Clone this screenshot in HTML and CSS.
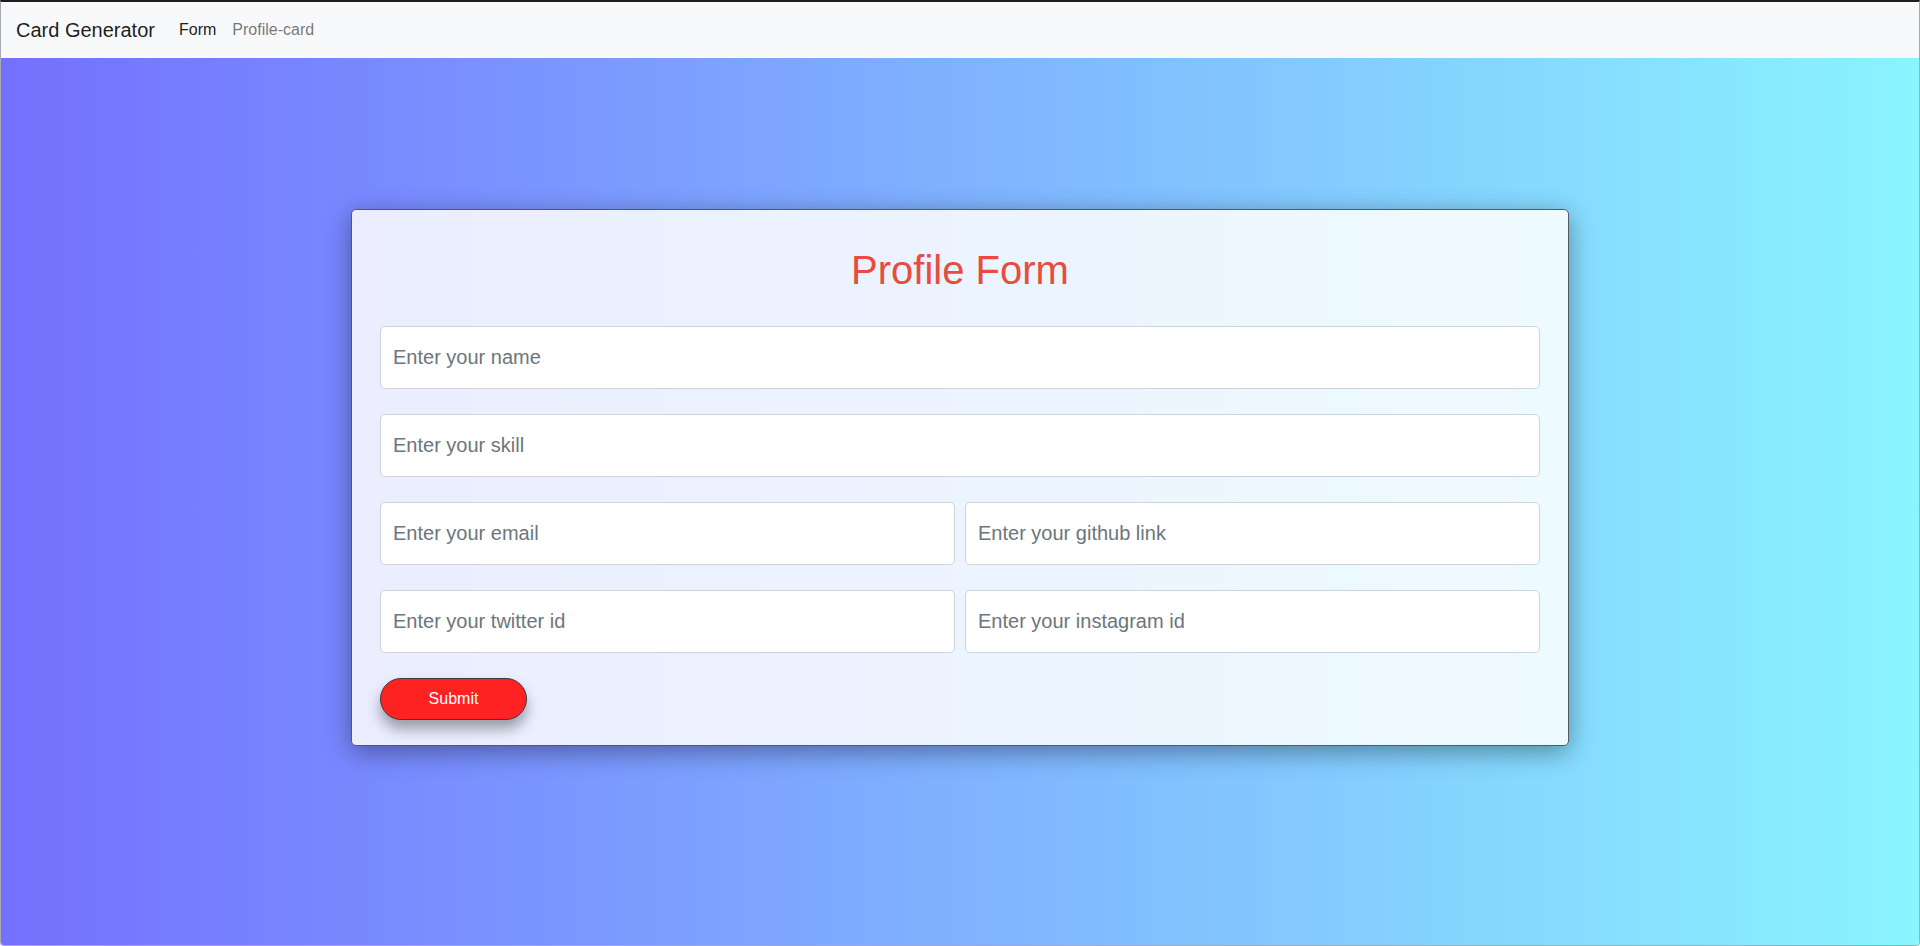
FILE: index.html
```html
<!DOCTYPE html>
<html lang="en">
<head>
<meta charset="utf-8">
<title>Card Generator</title>
<link rel="stylesheet" href="styles.css">
</head>
<body>
<div class="page">
  <nav class="navbar">
    <a class="brand" href="#">Card Generator</a>
    <a class="nav-link active" href="#">Form</a>
    <a class="nav-link" href="#">Profile-card</a>
  </nav>
  <main class="main">
    <form class="card">
      <h1 class="title">Profile Form</h1>
      <input class="field" type="text" placeholder="Enter your name">
      <input class="field" type="text" placeholder="Enter your skill">
      <div class="pair">
        <input class="field" type="text" placeholder="Enter your email">
        <input class="field" type="text" placeholder="Enter your github link">
      </div>
      <div class="pair">
        <input class="field" type="text" placeholder="Enter your twitter id">
        <input class="field" type="text" placeholder="Enter your instagram id">
      </div>
      <button class="submit" type="button">Submit</button>
    </form>
  </main>
</div>
</body>
</html>
```
FILE: styles.css
```css
* { box-sizing: border-box; }
html, body { margin: 0; padding: 0; height: 100%; }
body { font-family: "Liberation Sans", Arial, sans-serif; color: #212529; }

.page {
  height: 946px;
  display: flex;
  flex-direction: column;
  border: 1px solid #a7aab0;
  border-top: 2px solid #1e1e1e;
  border-radius: 0 0 4px 4px;
  overflow: hidden;
}

.navbar {
  height: 56px;
  flex: none;
  background: #f8f9fa;
  display: flex;
  align-items: center;
  padding: 0 15px;
}
.brand {
  font-size: 20px;
  line-height: 30px;
  color: rgba(0,0,0,.9);
  text-decoration: none;
  margin-right: 16px;
}
.nav-link {
  font-size: 16px;
  line-height: 24px;
  padding: 8px;
  color: rgba(0,0,0,.55);
  text-decoration: none;
}
.nav-link.active { color: rgba(0,0,0,.9); }

.main {
  flex: 1;
  background: linear-gradient(to right, #7470ff, #8af4ff);
  padding-top: 151px;
}

.card {
  width: 1218px;
  margin: 0 auto;
  background: rgba(255,255,255,.85);
  border: 1px solid #555a60;
  border-radius: 5px;
  box-shadow: 0 6px 26px rgba(0,0,0,.38);
  padding: 36px 28px 25px;
  display: flex;
  flex-direction: column;
  gap: 25px;
}
.title {
  margin: 0 0 7px;
  font-size: 40px;
  line-height: 48px;
  font-weight: 400;
  text-align: center;
  color: #e74c3c;
}
.field {
  display: block;
  width: 100%;
  height: 63px;
  padding: 0 12px;
  font: 20px/30px "Liberation Sans", Arial, sans-serif;
  color: #212529;
  background: #fff;
  border: 1px solid #ced4da;
  border-radius: 5px;
  outline: none;
}
.field::placeholder { color: #6c757d; opacity: 1; }

.pair {
  display: grid;
  grid-template-columns: 1fr 1fr;
  gap: 10px;
}

.submit {
  align-self: flex-start;
  width: 147px;
  height: 42px;
  margin-top: 0;
  background: #ff2222;
  color: #fff;
  font: 16px/24px "Liberation Sans", Arial, sans-serif;
  border: 1px solid #3a3d44;
  border-radius: 21px;
  box-shadow: 0 9px 14px rgba(0,0,0,.35);
  cursor: pointer;
}
```
